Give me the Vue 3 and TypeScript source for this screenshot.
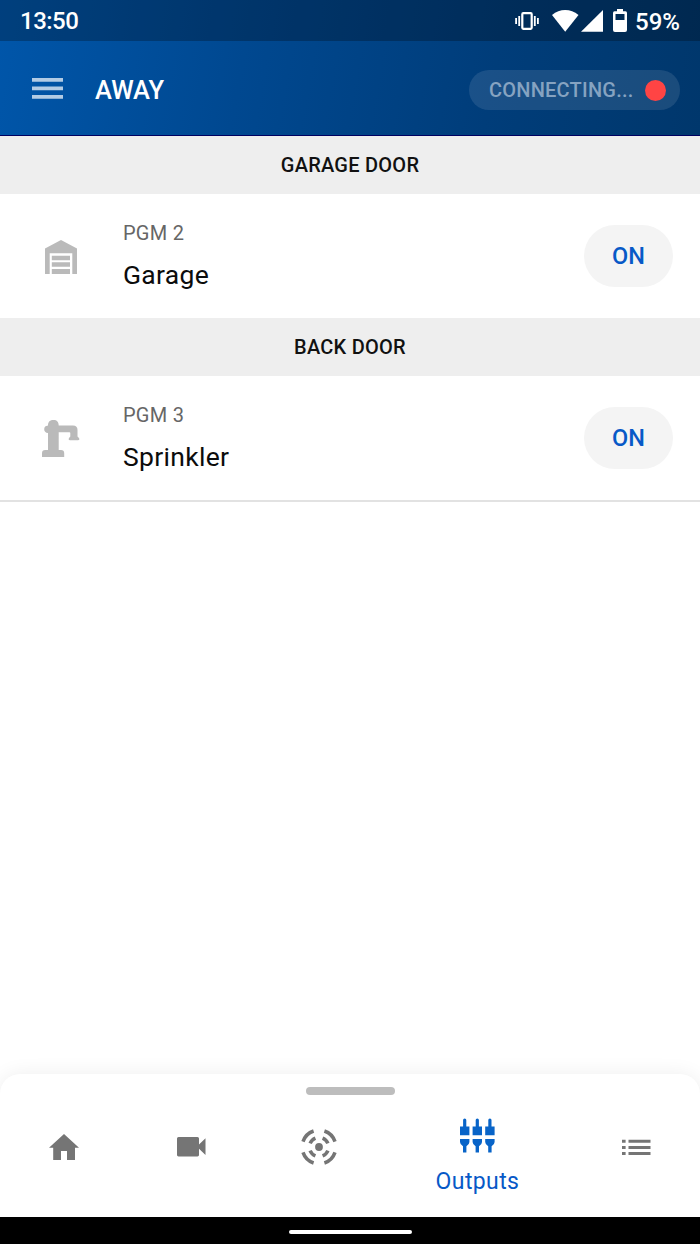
<script setup lang="ts">
interface Output {
  section: string
  program: string
  name: string
  icon: 'garage' | 'sprinkler'
}

const outputs: Output[] = [
  { section: 'GARAGE DOOR', program: 'PGM 2', name: 'Garage', icon: 'garage' },
  { section: 'BACK DOOR', program: 'PGM 3', name: 'Sprinkler', icon: 'sprinkler' },
]
const columns: number[] = [0, 12.6, 25.2]
const quadrants: number[] = [0, 90, 180, 270]
</script>

<template>
  <div class="screen">
    <header class="top">
      <div class="status">
        <span class="clock">13:50</span>
        <svg class="vibrate" width="24" height="18" viewBox="0 0 24 18">
          <rect x="7.3" y="1.2" width="9.4" height="15.6" rx="1" fill="none" stroke="#fff" stroke-width="2.2" />
          <path d="M4.2 4v10M1.1 6v6M19.8 4v10M22.9 6v6" stroke="#fff" stroke-width="1.8" />
        </svg>
        <svg class="wifi" width="27" height="22" viewBox="0 0 27 22">
          <path d="M0 5Q6 0 13.2 0T26.5 5L13.2 21.8Z" fill="#fff" />
        </svg>
        <svg class="signal" width="23" height="22" viewBox="0 0 23 22">
          <path d="M22 0V21.7H0Z" fill="#fff" />
        </svg>
        <svg class="battery" width="14" height="23" viewBox="0 0 14 23">
          <path fill="#fff" fill-rule="evenodd" d="M4 0H10V2.3H12.5Q14 2.3 14 4V21Q14 23 12 23H2Q0 23 0 21V4Q0 2.3 1.5 2.3H4ZM2.5 5V11H11.5V5Z" />
        </svg>
        <span class="percent">59%</span>
      </div>
      <div class="bar">
        <svg class="menu" width="31" height="21" viewBox="0 0 31 21">
          <path d="M0 1.9H31M0 10.4H31M0 18.9H31" stroke="#b2cbe4" stroke-width="3.8" />
        </svg>
        <span class="mode">AWAY</span>
        <div class="pill"><span>CONNECTING...</span><i class="dot"></i></div>
      </div>
    </header>

    <main class="list">
      <section v-for="item in outputs" :key="item.program">
        <h2 class="heading">{{ item.section }}</h2>
        <div class="row">
          <div class="pic">
            <svg v-if="item.icon === 'garage'" width="32" height="34" viewBox="0 0 32 34" fill="#bababa">
              <path d="M0 34V8.5L16 0L32 8.5V34H27.3V13.3H4.7V34Z" />
              <path d="M6.8 15.7H25V20.2H6.8ZM6.8 22.2H25V26.7H6.8ZM6.8 29H25V34H6.8Z" />
            </svg>
            <svg v-else width="38" height="38" viewBox="0 0 38 38" fill="#bababa">
              <path d="M6 5.5C6 1.8 8 0 11.5 0S16.7 2 16.7 5.5H31Q35.5 5.5 35.5 10V16.4L37 18Q38 20.2 36 20.2H28Q26 20.2 27 18L28.3 16.4V13Q28.3 12.2 27.5 12.2H16.7V30H19Q22.2 30 22.2 33.3V37H0V33.3Q0 30 3.2 30H6V13Q2.2 12.5 2.2 9.2T6 5.5Z" />
            </svg>
          </div>
          <div class="info">
            <span class="program">{{ item.program }}</span>
            <span class="name">{{ item.name }}</span>
          </div>
          <button class="toggle">ON</button>
        </div>
      </section>
    </main>

    <nav class="sheet">
      <div class="grip"></div>
      <div class="tabs">
        <div class="tab home">
          <svg width="30" height="26" viewBox="0 0 30 26"><path d="M15 0L30 13.8H26V26H18V17H12V26H4.2V13.8H0Z" fill="#757575" /></svg>
        </div>
        <div class="tab camera">
          <svg width="29" height="20" viewBox="0 0 29 20"><path d="M1.5 0H20.5Q22 0 22 1.5V7.5L28.5 1.2V18L22 11.8V18Q22 19.4 20.5 19.4H1.5Q0 19.4 0 18V1.5Q0 0 1.5 0Z" fill="#757575" /></svg>
        </div>
        <div class="tab sensor">
          <svg width="36" height="36" viewBox="-18 -18 36 36">
            <circle r="3.9" fill="#757575" />
            <g v-for="angle in quadrants" :key="angle" :transform="`rotate(${angle})`" fill="none" stroke="#757575" stroke-width="3.5">
              <path d="M5.4 -16A16.9 16.9 0 0 1 16 -5.4" />
              <path d="M3.6 -8.9A9.6 9.6 0 0 1 8.9 -3.6" />
            </g>
          </svg>
        </div>
        <div class="tab outputs">
          <svg width="36" height="36" viewBox="0 0 36 36" fill="#0864c8">
            <path v-for="x in columns" :key="x" :transform="`translate(${x} 0)`" d="M3.1 2Q3.1 .5 4.7 .5T6.3 2V8.5H9.4V17.3H0V8.5H3.1ZM0 21H9.4V24Q9.4 26.5 6.4 28.2V34.5H3V28.2Q0 26.5 0 24Z" />
          </svg>
          <span>Outputs</span>
        </div>
        <div class="tab more">
          <svg width="29" height="17" viewBox="0 0 29 17"><path d="M0 2.2H3.6M6.5 2.2H28.5M0 8.4H3.6M6.5 8.4H28.5M0 14.6H3.6M6.5 14.6H28.5" stroke="#757575" stroke-width="3" /></svg>
        </div>
      </div>
    </nav>
    <footer class="system"><div></div></footer>
  </div>
</template>

<style>
body { margin: 0; }
</style>

<style scoped>
.screen { width: 700px; height: 1244px; display: flex; flex-direction: column; background: #fff; font-family: Roboto, sans-serif; overflow: hidden; }
.screen svg { display: block; flex: none; }
.top { height: 135px; flex: none; border-bottom: 1px solid #000060; background: linear-gradient(100deg, #0056aa 0%, #004890 35%, #003d7a 70%, #00376c 100%); }
.status { height: 41px; box-sizing: border-box; display: flex; align-items: center; padding: 0 20px; background: rgba(0, 0, 0, .26); color: #fff; font-size: 24px; font-weight: 500; }
.clock { flex: 1; letter-spacing: -.5px; line-height: 40px; padding-top: 1px; }
.vibrate { margin-right: 13px; }
.wifi { margin-right: 2px; }
.signal { margin-right: 9px; }
.battery { margin-right: 6px; }
.percent { width: 47px; display: flex; justify-content: flex-end; font-size: 24px; padding-top: 2px; }
.bar { height: 94px; display: flex; align-items: center; padding: 0 20px 0 32px; }
.mode { margin-left: 32px; padding-top: 4px; flex: 1; color: #fff; font-size: 25.5px; font-weight: 500; }
.pill { width: 211px; height: 40px; margin-top: 4px; box-sizing: border-box; padding: 0 14px 0 20px; border-radius: 20px; display: flex; align-items: center; justify-content: space-between; background: rgba(255, 255, 255, .1); color: #86a3c1; font-size: 20px; font-weight: 500; letter-spacing: .22px; }
.dot { width: 21px; height: 21px; border-radius: 50%; background: #ff4444; }
.list { flex: 1; min-height: 0; }
.heading { margin: 0; height: 58px; line-height: 58px; text-align: center; background: #eee; color: #111; font-size: 20px; font-weight: 500; letter-spacing: .25px; }
.row { height: 124px; display: flex; align-items: center; padding-right: 27px; }
section:last-child .row { border-bottom: 2px solid #e2e2e2; }
.pic { width: 123px; display: flex; justify-content: center; box-sizing: border-box; padding: 1px 1px 0 0; }
.info { flex: 1; display: flex; flex-direction: column; }
.program { font-size: 20px; line-height: 28px; letter-spacing: .25px; color: #666; }
.name { font-size: 26.5px; line-height: 36px; margin-top: 10px; letter-spacing: .3px; color: #0c0c0c; }
.toggle { width: 89px; height: 62px; border: 0; border-radius: 31px; padding: 0; background: #f4f4f4; color: #0759c7; font: 500 23.5px Roboto, sans-serif; }
.sheet { height: 143px; flex: none; box-sizing: border-box; padding-top: 13px; border-radius: 20px 20px 0 0; background: #fff; box-shadow: 0 0 20px rgba(0, 0, 0, .07); }
.grip { width: 89px; height: 8px; border-radius: 4px; margin: 0 auto; background: #bdbdbd; }
.tabs { height: 104px; display: grid; grid-template-columns: 127px 128px 127px 190px 128px; }
.tab { display: flex; justify-content: center; align-items: center; }
.outputs { flex-direction: column; box-sizing: border-box; padding: 19px 0 0 1px; color: #0759c7; font-size: 23px; letter-spacing: .4px; }
.outputs span { line-height: 28px; margin-top: 14px; }
.system { height: 27px; flex: none; background: #000; display: flex; justify-content: center; align-items: center; }
.system div { width: 123px; height: 4px; border-radius: 2px; background: #fff; margin-top: 3px; }
</style>
